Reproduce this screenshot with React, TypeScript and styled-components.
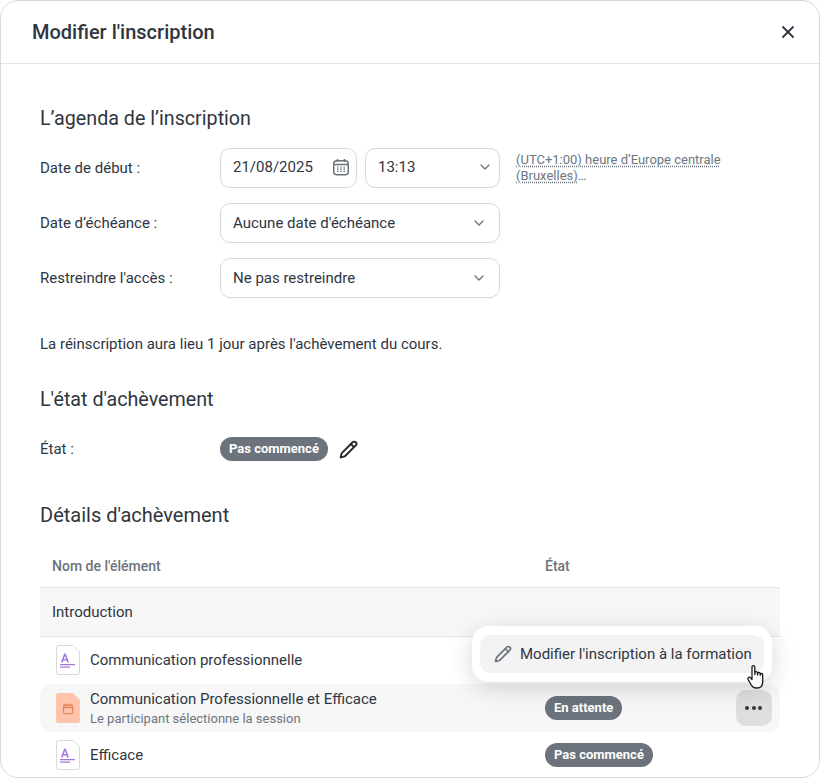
import React from 'react'
import styled, { createGlobalStyle } from 'styled-components'
import { ChevronDown, Pencil, X } from 'lucide-react'

const GlobalStyle = createGlobalStyle`
    html, body { margin: 0; padding: 0; background: #fff; }
    body { font-family: Roboto, "Liberation Sans", sans-serif; color: #2f3640; }
`

const Modal = styled.div`
    position: relative;
    box-sizing: border-box;
    width: 820px;
    height: 778px;
    background: #fff;
    border: 1px solid #d9d9d9;
    border-radius: 18px;
    overflow: hidden;
`

const Header = styled.header`
    box-sizing: border-box;
    height: 63px;
    padding: 0 21px 0 31px;
    display: flex;
    align-items: center;
    justify-content: space-between;
    border-bottom: 1px solid #e3e3e3;
`

const ModalTitle = styled.h1`
    margin: 0;
    font-size: 20px;
    line-height: 24px;
    font-weight: 500;
    color: #2f3640;
`

const CloseButton = styled.button`
    width: 20px;
    height: 20px;
    padding: 0;
    display: flex;
    align-items: center;
    justify-content: center;
    background: none;
    border: none;
    color: #2f3640;
`

const Body = styled.div`
    padding: 0 39px;
`

const SectionTitle = styled.h2<{ $top: number; $size?: number }>`
    margin: ${ p => p.$top }px 0 0;
    font-size: ${ p => p.$size ?? 19.7 }px;
    line-height: 24px;
    font-weight: 400;
    color: #2f3640;
`

const FormRows = styled.div`
    margin-top: 17px;
    display: flex;
    flex-direction: column;
    gap: 15px;
`

const FormRow = styled.div`
    display: flex;
    align-items: center;
    height: 40px;
`

const Label = styled.div`
    width: 180px;
    flex-shrink: 0;
    font-size: 15px;
    color: #2f3640;
`

const Field = styled.div<{ $width: number; $tight?: boolean }>`
    box-sizing: border-box;
    width: ${ p => p.$width }px;
    height: 40px;
    padding: ${ p => p.$tight ? '0 6px 2px 12px' : '0 12px' };
    display: flex;
    align-items: center;
    justify-content: space-between;
    font-size: 15px;
    color: #2f3640;
    border: 1px solid #d9d9d9;
    border-radius: 10px;
    background: #fff;

    & + & {
        margin-left: 8px;
    }
`

const Arrow = styled(ChevronDown)`
    color: #6c737c;
    flex-shrink: 0;
`

const Timezone = styled.div`
    margin: 0 0 1px 16px;
    width: 230px;
    font-size: 13px;
    line-height: 16px;
    color: #6c7680;
`

const TimezoneLine = styled.div``

const Dotted = styled.span`
    text-decoration: underline dotted #6c7680;
    text-underline-offset: 2px;
`

const Note = styled.p`
    margin: 37px 0 0;
    font-size: 15px;
    line-height: 18px;
    color: #2f3640;
`

const StateRow = styled.div`
    margin-top: 17px;
    height: 40px;
    display: flex;
    align-items: center;
`

const Badge = styled.span`
    display: inline-block;
    padding: 0 9px;
    height: 24px;
    line-height: 24px;
    font-size: 13px;
    font-weight: 700;
    color: #fff;
    background: #6c737c;
    border-radius: 12px;
    white-space: nowrap;
`

const EditButton = styled.span`
    margin-left: 11px;
    display: flex;
    color: #23282e;
`

const Table = styled.div`
    margin-top: 18px;
`

const HeadRow = styled.div`
    display: grid;
    grid-template-columns: 493px 1fr;
    height: 42px;
    align-items: center;
    padding-left: 12px;
    font-size: 14px;
    font-weight: 500;
    color: #6c737c;
    border-bottom: 1px solid #e3e3e3;
`

const GroupRow = styled.div`
    height: 48px;
    display: flex;
    align-items: center;
    padding-left: 12px;
    font-size: 15px;
    color: #2f3640;
    background: #f7f7f7;
    border-bottom: 1px solid #e3e3e3;
`

const ItemRow = styled.div<{ $active?: boolean }>`
    box-sizing: border-box;
    display: grid;
    grid-template-columns: 489px 1fr auto;
    align-items: center;
    height: ${ p => p.$active ? 48 : 47 }px;
    padding: ${ p => p.$active ? '0 8px 0 16px' : '0 8px 2px 16px' };
    border-radius: 12px;
    background: ${ p => p.$active ? '#f7f7f7' : 'transparent' };
`

const ItemName = styled.div`
    display: flex;
    align-items: center;
    gap: 10px;
`

const ItemText = styled.div`
    font-size: 15px;
    line-height: 18px;
    color: #2f3640;
`

const ItemSub = styled.div`
    font-size: 13px;
    line-height: 16px;
    margin-top: 3px;
    color: #6c7680;
`

const MoreButton = styled.div`
    width: 36px;
    height: 36px;
    padding-right: 1px;
    box-sizing: border-box;
    display: flex;
    align-items: center;
    justify-content: center;
    gap: 2.5px;
    border-radius: 10px;
    background: #dedede;
`

const Dot = styled.i`
    width: 4px;
    height: 4px;
    border-radius: 50%;
    background: #33383e;
`

const Popover = styled.div`
    position: absolute;
    left: 471px;
    top: 625px;
    box-sizing: border-box;
    width: 300px;
    height: 56px;
    padding: 9px 8px;
    background: #fff;
    border-radius: 16px;
    box-shadow: 0 6px 24px rgba(0, 0, 0, 0.16);
`

const PopoverItem = styled.div`
    height: 38px;
    display: flex;
    align-items: center;
    gap: 8px;
    padding-left: 14px;
    font-size: 15px;
    color: #2f3640;
    background: #f3f3f3;
    border-radius: 10px;
    white-space: nowrap;
`

const PopoverIcon = styled(Pencil)`
    color: #6c737c;
`

const HandCursor = styled.svg`
    position: absolute;
    left: 745px;
    top: 663px;
`

const CalendarIcon = () => (
    <svg width="18" height="18" viewBox="0 0 18 18" fill="none">
        <rect x="1.75" y="2.75" width="14.5" height="14" rx="3" stroke="#6c737c" strokeWidth="1.5" />
        <path d="M2 6.5h14" stroke="#6c737c" strokeWidth="1.5" />
        <path d="M5.5 1v3M12.5 1v3" stroke="#6c737c" strokeWidth="1.5" />
        <path d="M5 9h1.6M8.2 9h1.6M11.4 9h1.6M5 11.2h1.6M8.2 11.2h1.6M11.4 11.2h1.6M5 13.4h1.6M8.2 13.4h1.6M11.4 13.4h1.6" stroke="#6c737c" strokeWidth="1.2" />
    </svg>
)

const ArticleIcon = () => (
    <svg width="24" height="30" viewBox="0 0 24 30" fill="none">
        <path d="M2.5 .5H17L23.5 7V27.5a2 2 0 0 1-2 2H2.5a2 2 0 0 1-2-2V2.5a2 2 0 0 1 2-2Z" fill="#fff" stroke="#d9d9d9" />
        <path d="M4.9 17.4 8.2 8.6h1.5l3.3 8.8h-1.9l-.6-1.9H7.4l-.6 1.9ZM7.9 14h2.1L8.95 10.8Z" fill="#a678dc" />
        <path d="M4 19.6h15" stroke="#a678dc" strokeWidth="1.3" />
        <path d="M4 22.2h10" stroke="#a678dc" strokeWidth="1.3" />
    </svg>
)

const SessionIcon = () => (
    <svg width="24" height="30" viewBox="0 0 24 30" fill="none">
        <path d="M2.5 0H17L24 7V27.5a2.5 2.5 0 0 1-2.5 2.5H2.5A2.5 2.5 0 0 1 0 27.5V2.5A2.5 2.5 0 0 1 2.5 0Z" fill="#ffc4ac" />
        <rect x="7.6" y="12" width="9" height="8.6" rx="1" stroke="#e2895f" strokeWidth="1.3" />
        <path d="M7.6 14.4h9" stroke="#e2895f" strokeWidth="1.6" />
        <path d="M9.6 10.4v2M14.6 10.4v2" stroke="#e2895f" strokeWidth="1.2" />
    </svg>
)

const App: React.FC = () => {
    return (
        <Modal>
            <GlobalStyle />
            <Header>
                <ModalTitle>Modifier l'inscription</ModalTitle>
                <CloseButton><X size={20} strokeWidth={2.2} /></CloseButton>
            </Header>
            <Body>
                <SectionTitle $top={43}>L’agenda de l’inscription</SectionTitle>
                <FormRows>
                    <FormRow>
                        <Label>Date de début :</Label>
                        <Field $width={137} $tight>21/08/2025<CalendarIcon /></Field>
                        <Field $width={135} $tight>13:13<Arrow size={16} /></Field>
                        <Timezone>
                            <TimezoneLine><Dotted>(UTC+1:00) heure d’Europe centrale</Dotted></TimezoneLine>
                            <TimezoneLine><Dotted>(Bruxelles)</Dotted>…</TimezoneLine>
                        </Timezone>
                    </FormRow>
                    <FormRow>
                        <Label>Date d’échéance :</Label>
                        <Field $width={280}>Aucune date d'échéance<Arrow size={16} /></Field>
                    </FormRow>
                    <FormRow>
                        <Label>Restreindre l'accès :</Label>
                        <Field $width={280}>Ne pas restreindre<Arrow size={16} /></Field>
                    </FormRow>
                </FormRows>
                <Note>La réinscription aura lieu 1 jour après l'achèvement du cours.</Note>
                <SectionTitle $top={35}>L'état d'achèvement</SectionTitle>
                <StateRow>
                    <Label>État :</Label>
                    <Badge>Pas commencé</Badge>
                    <EditButton><Pencil size={19} strokeWidth={2.4} /></EditButton>
                </StateRow>
                <SectionTitle $top={34} $size={20}>Détails d'achèvement</SectionTitle>
                <Table>
                    <HeadRow>
                        <span>Nom de l'élément</span>
                        <span>État</span>
                    </HeadRow>
                    <GroupRow>Introduction</GroupRow>
                    <ItemRow>
                        <ItemName>
                            <ArticleIcon />
                            <ItemText>Communication professionnelle</ItemText>
                        </ItemName>
                    </ItemRow>
                    <ItemRow $active>
                        <ItemName>
                            <SessionIcon />
                            <div>
                                <ItemText>Communication Professionnelle et Efficace</ItemText>
                                <ItemSub>Le participant sélectionne la session</ItemSub>
                            </div>
                        </ItemName>
                        <div><Badge>En attente</Badge></div>
                        <MoreButton><Dot /><Dot /><Dot /></MoreButton>
                    </ItemRow>
                    <ItemRow>
                        <ItemName>
                            <ArticleIcon />
                            <ItemText>Efficace</ItemText>
                        </ItemName>
                        <div><Badge>Pas commencé</Badge></div>
                    </ItemRow>
                </Table>
            </Body>
            <Popover>
                <PopoverItem>
                    <PopoverIcon size={18} strokeWidth={2.2} />
                    Modifier l'inscription à la formation
                </PopoverItem>
            </Popover>
            <HandCursor width="20" height="27" viewBox="0 0 20 26" fill="#fff" stroke="#1c1c1c" strokeWidth="1.3" strokeLinejoin="round">
                <path d="M6 2.5a1.4 1.4 0 0 1 2.8 0V10l.1-1.6a1.3 1.3 0 0 1 2.6 0V10.5l.1-1.2a1.3 1.3 0 0 1 2.6 0v1.6l.1-.7a1.2 1.2 0 0 1 2.4 0V17c0 3.6-1.9 6.5-5.6 6.5H10c-2.4 0-3.6-1-4.7-3L2 14.8a1.5 1.5 0 0 1 2.5-1.6L6 15Z" />
            </HandCursor>
        </Modal>
    )
}

export default App
